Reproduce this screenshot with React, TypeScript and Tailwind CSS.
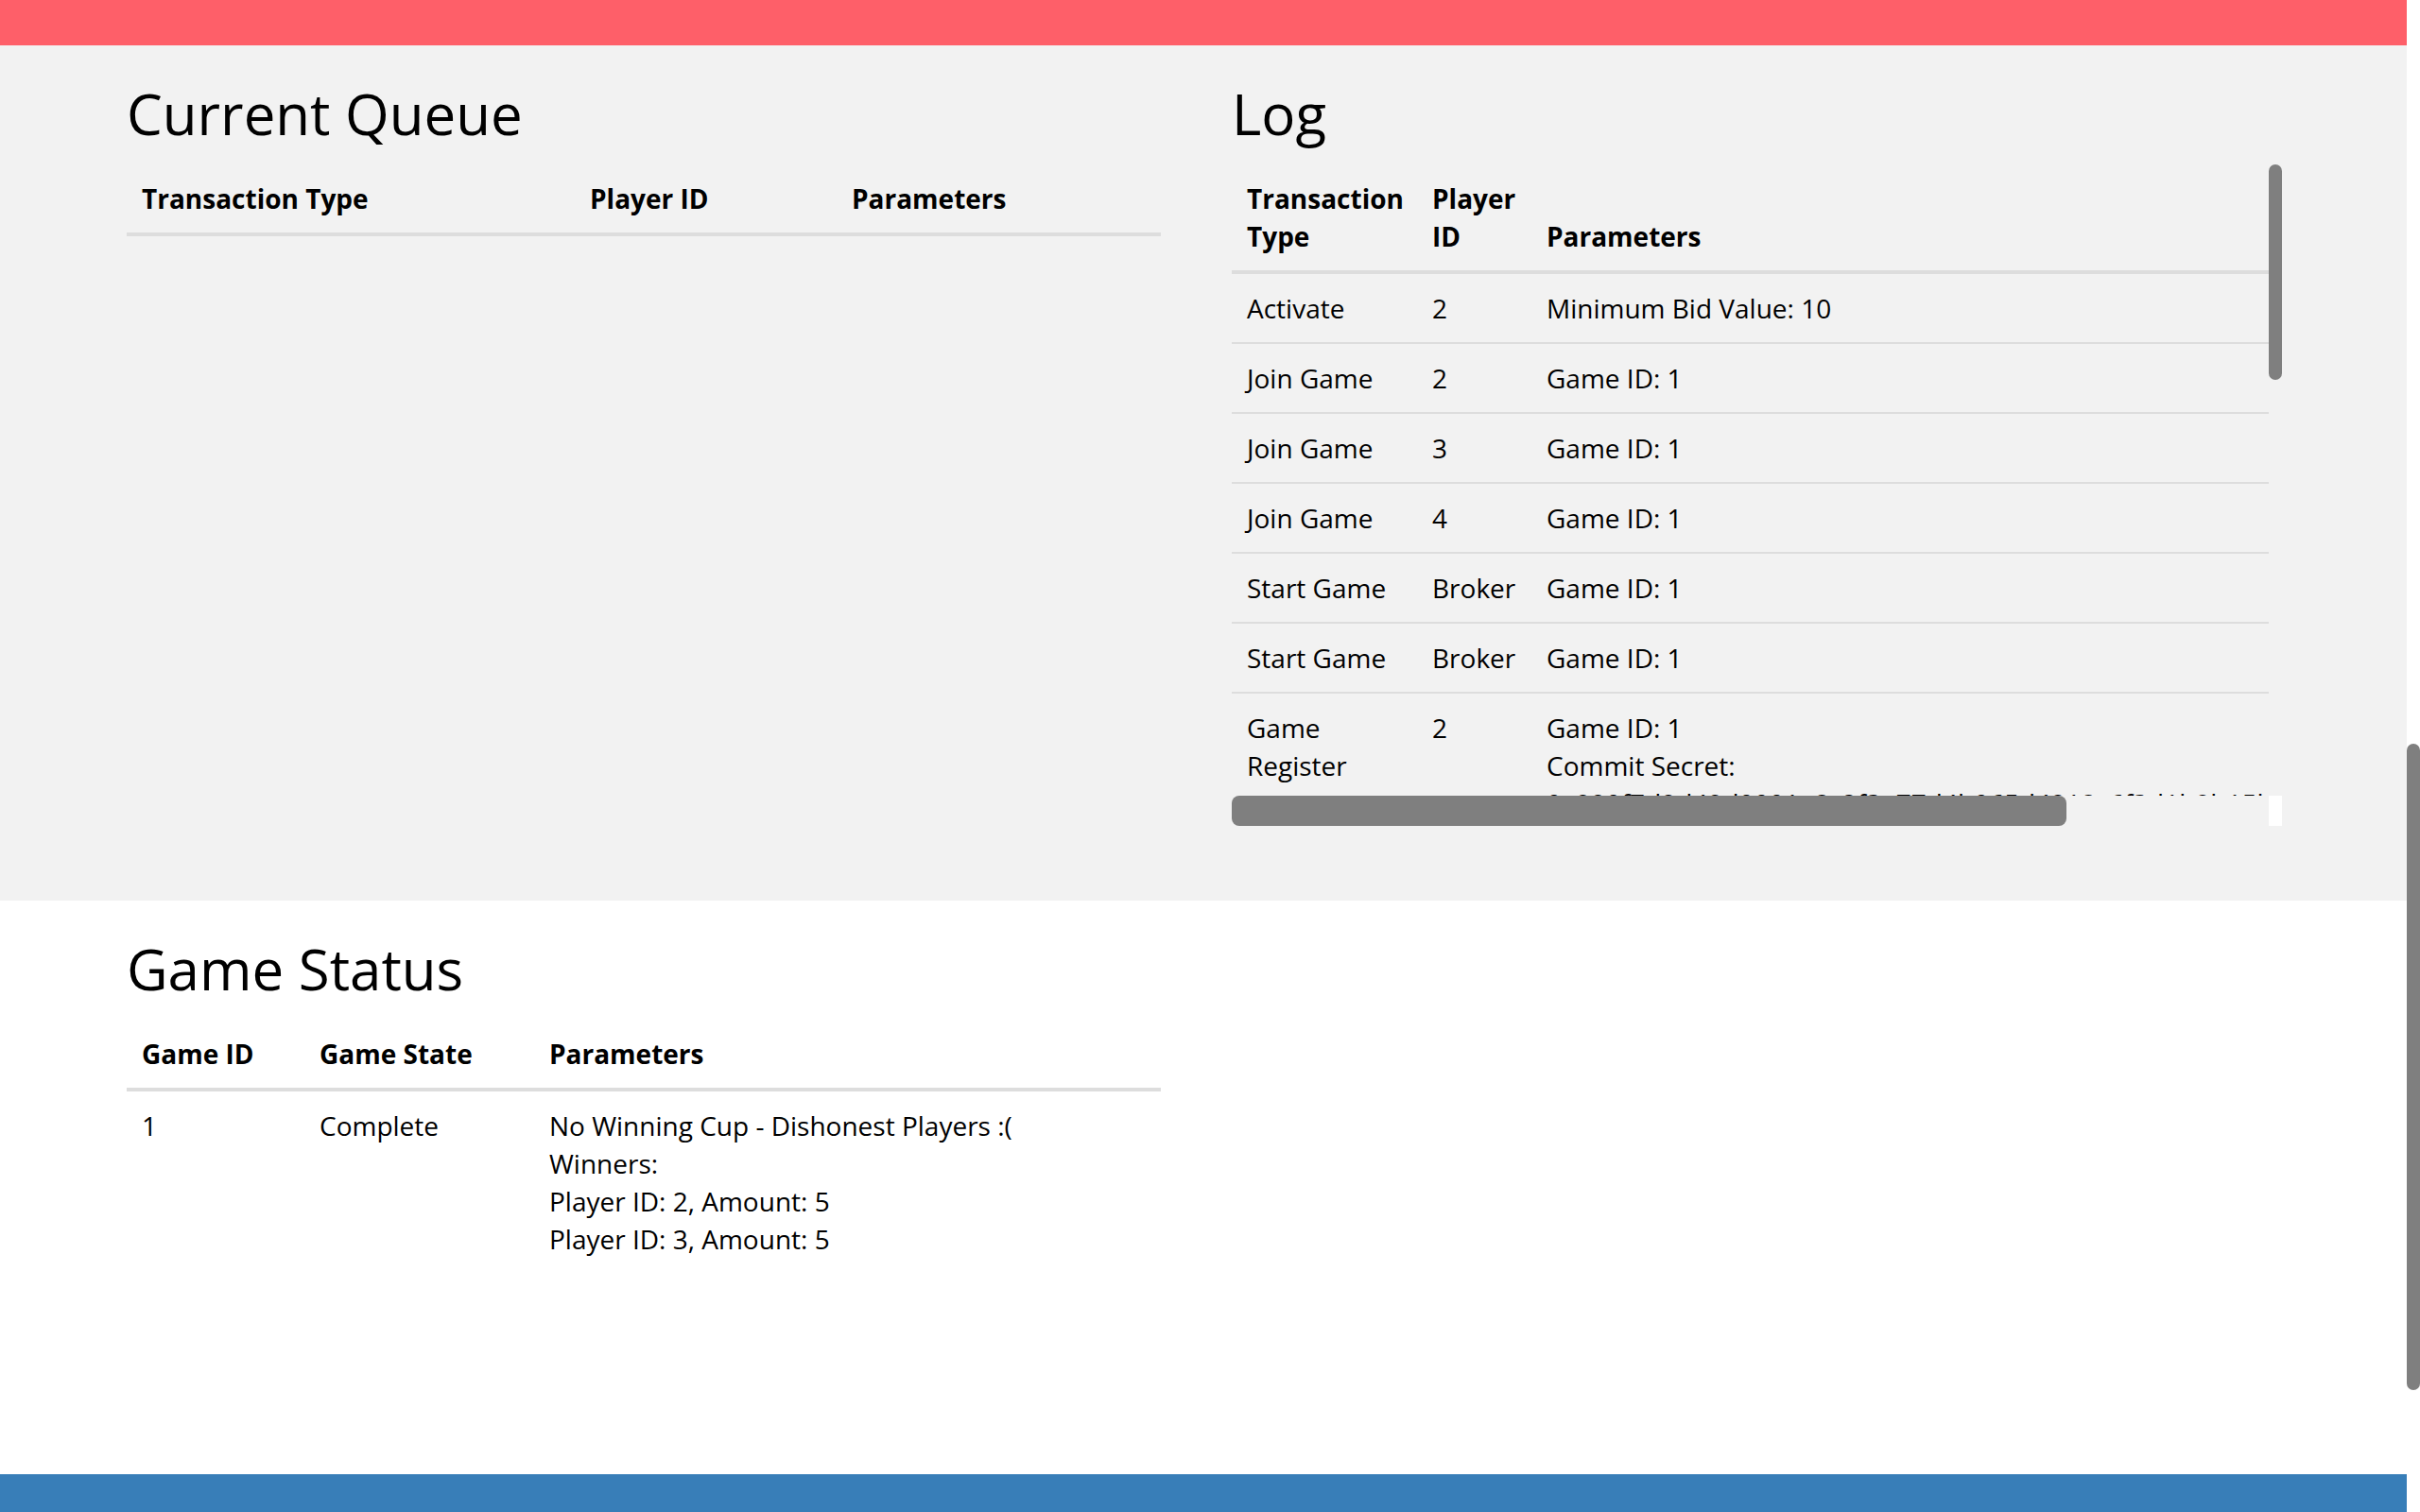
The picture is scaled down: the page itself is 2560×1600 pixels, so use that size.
import React from "react";

type LogEntry = { type: string; player: string; params: string[] };

const LOG: LogEntry[] = [
  { type: "Activate", player: "2", params: ["Minimum Bid Value: 10"] },
  { type: "Join Game", player: "2", params: ["Game ID: 1"] },
  { type: "Join Game", player: "3", params: ["Game ID: 1"] },
  { type: "Join Game", player: "4", params: ["Game ID: 1"] },
  { type: "Start Game", player: "Broker", params: ["Game ID: 1"] },
  { type: "Start Game", player: "Broker", params: ["Game ID: 1"] },
  {
    type: "Game Register",
    player: "2",
    params: [
      "Game ID: 1",
      "Commit Secret:",
      "0x990f7d9d49d0001a8c2f3e77d4b065d4918c6f3d1b9b15b4e",
    ],
  },
  {
    type: "Game Register",
    player: "3",
    params: [
      "Game ID: 1",
      "Commit Secret:",
      "0x4ab2c61e09d3f5a7b8e01c2d3f4a5b6c7d8e9f0a1b2c3d4e5",
    ],
  },
];

const th = "px-[16px] py-[16px] text-left align-bottom font-bold";
const td = "px-[16px] py-[16px] align-top";

function Heading({ children }: { children: React.ReactNode }) {
  return <h2 className="text-[60px] leading-[72px] font-normal mb-[18px]">{children}</h2>;
}

export default function App() {
  return (
    <div className="flex w-[2560px] h-[1600px] overflow-hidden bg-white text-black font-['Open_Sans',sans-serif] text-[28px] leading-[40px]">
      <div className="flex flex-col w-[2546px]">
        {/* top bar */}
        <div className="h-[48px] shrink-0 bg-[#fe5f69]" />

        {/* queue + log */}
        <section className="bg-[#f2f2f2] pt-[36px] pb-[79px] pl-[134px] flex gap-[75px]">
          <div className="w-[1094px]">
            <Heading>Current Queue</Heading>
            <table className="table-fixed w-[1094px] border-collapse">
              <colgroup>
                <col className="w-[474px]" />
                <col className="w-[277px]" />
                <col />
              </colgroup>
              <thead className="border-b-4 border-[#dddddd]">
                <tr>
                  <th className={th}>Transaction Type</th>
                  <th className={th}>Player ID</th>
                  <th className={th}>Parameters</th>
                </tr>
              </thead>
              <tbody />
            </table>
          </div>

          <div className="w-[1111px]">
            <Heading>Log</Heading>
            <div className="relative w-[1111px] h-[700px]">
              <div className="w-[1097px] h-[668px] overflow-hidden">
                <table className="table-fixed w-[1363px] border-collapse">
                  <colgroup>
                    <col className="w-[196px]" />
                    <col className="w-[121px]" />
                    <col />
                  </colgroup>
                  <thead className="border-b-4 border-[#dddddd]">
                    <tr>
                      <th className={th}>Transaction Type</th>
                      <th className={th}>Player ID</th>
                      <th className={th}>Parameters</th>
                    </tr>
                  </thead>
                  <tbody>
                    {LOG.map((row, i) => (
                      <tr key={i} className={i > 0 ? "border-t-2 border-[#dddddd]" : ""}>
                        <td className={td}>{row.type}</td>
                        <td className={td}>{row.player}</td>
                        <td className={td}>
                          {row.params.map((p, j) => (
                            <div key={j} className="whitespace-nowrap">{p}</div>
                          ))}
                        </td>
                      </tr>
                    ))}
                  </tbody>
                </table>
              </div>
              {/* scrollbars of the log box */}
              <div className="absolute left-[1097px] top-0 w-[14px] h-[228px] rounded-full bg-[#7f7f7f]" />
              <div className="absolute left-0 top-[668px] w-[883px] h-[32px] rounded-[8px] bg-[#7f7f7f]" />
              <div className="absolute left-[1097px] top-[668px] w-[14px] h-[32px] bg-white" />
            </div>
          </div>
        </section>

        {/* game status */}
        <section className="flex-1 bg-white pt-[36px] pl-[134px]">
          <Heading>Game Status</Heading>
          <table className="table-fixed w-[1094px] border-collapse">
            <colgroup>
              <col className="w-[188px]" />
              <col className="w-[243px]" />
              <col />
            </colgroup>
            <thead className="border-b-4 border-[#dddddd]">
              <tr>
                <th className={th}>Game ID</th>
                <th className={th}>Game State</th>
                <th className={th}>Parameters</th>
              </tr>
            </thead>
            <tbody>
              <tr>
                <td className={td}>1</td>
                <td className={td}>Complete</td>
                <td className={td}>
                  <div>No Winning Cup - Dishonest Players :(</div>
                  <div>Winners:</div>
                  <div>Player ID: 2, Amount: 5</div>
                  <div>Player ID: 3, Amount: 5</div>
                </td>
              </tr>
            </tbody>
          </table>
        </section>

        {/* footer */}
        <div className="h-[40px] shrink-0 bg-[#387eb8]" />
      </div>

      {/* page scrollbar */}
      <div className="relative w-[14px] h-[1600px] bg-white">
        <div className="absolute left-0 top-[787px] w-[14px] h-[684px] rounded-full bg-[#7f7f7f]" />
      </div>
    </div>
  );
}
